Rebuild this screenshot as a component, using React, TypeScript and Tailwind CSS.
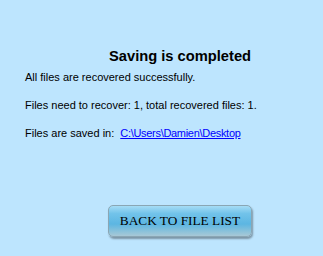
export default function App() {
  return (
    <div className="w-[323px] h-[256px] bg-[#bde5fe] flex flex-col" style={{ fontFamily: '"Liberation Sans", Arial, sans-serif' }}>
      <div className="h-[48px]" />
      <div className="pl-[109px] text-[14.7px] font-bold leading-[16px] text-black">Saving is completed</div>
      <div className="pl-[25px] mt-[7px] text-[11px] leading-[12px] text-black">All files are recovered successfully.</div>
      <div className="pl-[25px] mt-[16px] text-[11px] leading-[12px] text-black">Files need to recover: 1, total recovered files: 1.</div>
      <div className="pl-[25px] mt-[16px] text-[11px] leading-[12px] text-black flex">
        <span>Files are saved in:</span>
        <span className="ml-[6px] text-[#0000ff] underline tracking-[-0.3px]">C:\Users\Damien\Desktop</span>
      </div>
      <div className="pl-[108px] mt-[66px]">
        <button className="w-[144px] h-[32px] rounded-[5px] border border-[#8aa6b4] bg-[linear-gradient(to_bottom,#a6dcf5_0%,#72c3ea_25%,#5cb6e2_60%,#8cc2da_85%,#a8c8d6_100%)] shadow-[1px_2px_2px_rgba(0,0,0,0.35)] text-[13.3px] text-black" style={{ fontFamily: '"Liberation Serif", "Times New Roman", serif' }}>
          BACK TO FILE LIST
        </button>
      </div>
    </div>
  );
}
